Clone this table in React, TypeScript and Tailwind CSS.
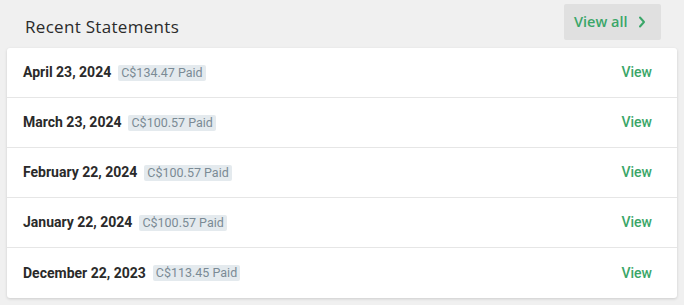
import React from "react";

const rows = [
  { date: "April 23, 2024", amount: "C$134.47 Paid" },
  { date: "March 23, 2024", amount: "C$100.57 Paid" },
  { date: "February 22, 2024", amount: "C$100.57 Paid" },
  { date: "January 22, 2024", amount: "C$100.57 Paid" },
  { date: "December 22, 2023", amount: "C$113.45 Paid" },
];

export default function App() {
  return (
    <div className="w-[684px] h-[305px] bg-[#f0f0f0] px-[7px] pt-[4px]" style={{ fontFamily: "Roboto, sans-serif" }}>
      <div className="flex items-start justify-between h-[44px]">
        <h2
          className="ml-[18px] mt-[12px] text-[17px] leading-[22px] tracking-[0.3px] text-[#2b2b2b]"
          style={{ fontFamily: "'Open Sans', sans-serif" }}
        >
          Recent Statements
        </h2>
        <button
          className="mr-[16px] w-[97px] h-[36px] rounded-[2px] bg-[#e0e0e0] flex items-center pl-[10px] gap-[10px] text-[14.5px] font-semibold text-[#3aa668]"
          style={{ fontFamily: "'Open Sans', sans-serif" }}
        >
          <span>View all</span>
          <svg width="8" height="12" viewBox="0 0 8 12" fill="none">
            <path d="M2 1.5 L6 6 L2 10.5" stroke="#3aa668" strokeWidth="2" strokeLinecap="round" strokeLinejoin="round" />
          </svg>
        </button>
      </div>
      <div className="bg-white rounded-[3px] shadow-[0_1px_3px_rgba(0,0,0,0.15)]">
        {rows.map((r, i) => (
          <div
            key={r.date}
            className={`flex items-center justify-between h-[50px] pl-[16px] pr-[25px] ${i < rows.length - 1 ? "border-b border-[#e6e6e6]" : ""}`}
          >
            <div className="flex items-center gap-[7px]">
              <span className="text-[14px] font-bold text-[#2a2a2a]">{r.date}</span>
              <span className="bg-[#e4eaee] text-[#7b8a95] text-[12.5px] leading-[16px] px-[3px] rounded-[2px]">{r.amount}</span>
            </div>
            <span className="text-[14px] font-medium text-[#3aa668]">View</span>
          </div>
        ))}
      </div>
    </div>
  );
}
